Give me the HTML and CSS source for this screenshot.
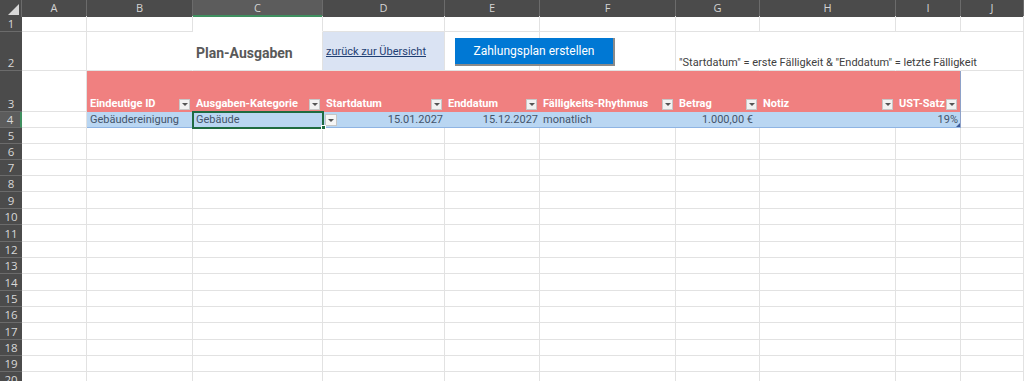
FILE: index.html
```html
<!DOCTYPE html>
<html lang="de">
<head>
<meta charset="utf-8">
<title>Plan-Ausgaben</title>
<link rel="stylesheet" href="styles.css">
</head>
<body>
<div class="sheet">
  <div class="row colhead">
    <div class="corner"><span class="tri"></span></div>
    <div class="ch">A</div><div class="ch">B</div><div class="ch ch-sel">C</div><div class="ch">D</div><div class="ch">E</div><div class="ch">F</div><div class="ch">G</div><div class="ch">H</div><div class="ch">I</div><div class="ch">J</div>
  </div>

  <div class="row h16">
    <div class="rh">1</div><div class="c"></div><div class="c"></div><div class="c nob"></div><div class="c"></div><div class="c"></div><div class="c"></div><div class="c"></div><div class="c"></div><div class="c"></div><div class="c"></div>
  </div>

  <div class="row h39">
    <div class="rh">2</div>
    <div class="c"></div>
    <div class="c nor"></div>
    <div class="c title-cell"><span class="title">Plan-Ausgaben</span></div>
    <div class="c link-cell"><a class="link" href="#">zurück zur Übersicht</a></div>
    <div class="c btn-host"><div class="macro-btn">Zahlungsplan erstellen</div></div>
    <div class="c"></div>
    <div class="c nor note-cell"><span class="note">"Startdatum" = erste Fälligkeit &amp; "Enddatum" = letzte Fälligkeit</span></div>
    <div class="c nor"></div>
    <div class="c nor"></div>
    <div class="c"></div>
  </div>

  <div class="row h41">
    <div class="rh">3</div>
    <div class="c"></div>
    <div class="th th-first"><span>Eindeutige ID</span><i class="flt"></i></div>
    <div class="th"><span>Ausgaben-Kategorie</span><i class="flt"></i></div>
    <div class="th"><span>Startdatum</span><i class="flt"></i></div>
    <div class="th"><span>Enddatum</span><i class="flt"></i></div>
    <div class="th"><span>Fälligkeits-Rhythmus</span><i class="flt"></i></div>
    <div class="th"><span>Betrag</span><i class="flt"></i></div>
    <div class="th"><span>Notiz</span><i class="flt"></i></div>
    <div class="th th-last"><span>UST-Satz</span><i class="flt"></i></div>
    <div class="c"></div>
  </div>

  <div class="row h16">
    <div class="rh rh-sel">4</div>
    <div class="c"></div>
    <div class="td td-first">Gebäudereinigung</div>
    <div class="td td-sel">Gebäude<span class="handle"></span></div>
    <div class="td num"><i class="dd"></i>15.01.2027</div>
    <div class="td num">15.12.2027</div>
    <div class="td">monatlich</div>
    <div class="td num cur">1.000,00 €</div>
    <div class="td"></div>
    <div class="td num td-last">19%<span class="resize"></span></div>
    <div class="c"></div>
  </div>

  <div class="row h16"><div class="rh">5</div><div class="c"></div><div class="c"></div><div class="c"></div><div class="c"></div><div class="c"></div><div class="c"></div><div class="c"></div><div class="c"></div><div class="c"></div><div class="c"></div></div>
  <div class="row h16"><div class="rh">6</div><div class="c"></div><div class="c"></div><div class="c"></div><div class="c"></div><div class="c"></div><div class="c"></div><div class="c"></div><div class="c"></div><div class="c"></div><div class="c"></div></div>
  <div class="row h16"><div class="rh">7</div><div class="c"></div><div class="c"></div><div class="c"></div><div class="c"></div><div class="c"></div><div class="c"></div><div class="c"></div><div class="c"></div><div class="c"></div><div class="c"></div></div>
  <div class="row h16"><div class="rh">8</div><div class="c"></div><div class="c"></div><div class="c"></div><div class="c"></div><div class="c"></div><div class="c"></div><div class="c"></div><div class="c"></div><div class="c"></div><div class="c"></div></div>
  <div class="row h17"><div class="rh">9</div><div class="c"></div><div class="c"></div><div class="c"></div><div class="c"></div><div class="c"></div><div class="c"></div><div class="c"></div><div class="c"></div><div class="c"></div><div class="c"></div></div>
  <div class="row h16"><div class="rh">10</div><div class="c"></div><div class="c"></div><div class="c"></div><div class="c"></div><div class="c"></div><div class="c"></div><div class="c"></div><div class="c"></div><div class="c"></div><div class="c"></div></div>
  <div class="row h17"><div class="rh">11</div><div class="c"></div><div class="c"></div><div class="c"></div><div class="c"></div><div class="c"></div><div class="c"></div><div class="c"></div><div class="c"></div><div class="c"></div><div class="c"></div></div>
  <div class="row h16"><div class="rh">12</div><div class="c"></div><div class="c"></div><div class="c"></div><div class="c"></div><div class="c"></div><div class="c"></div><div class="c"></div><div class="c"></div><div class="c"></div><div class="c"></div></div>
  <div class="row h16"><div class="rh">13</div><div class="c"></div><div class="c"></div><div class="c"></div><div class="c"></div><div class="c"></div><div class="c"></div><div class="c"></div><div class="c"></div><div class="c"></div><div class="c"></div></div>
  <div class="row h17"><div class="rh">14</div><div class="c"></div><div class="c"></div><div class="c"></div><div class="c"></div><div class="c"></div><div class="c"></div><div class="c"></div><div class="c"></div><div class="c"></div><div class="c"></div></div>
  <div class="row h16"><div class="rh">15</div><div class="c"></div><div class="c"></div><div class="c"></div><div class="c"></div><div class="c"></div><div class="c"></div><div class="c"></div><div class="c"></div><div class="c"></div><div class="c"></div></div>
  <div class="row h16"><div class="rh">16</div><div class="c"></div><div class="c"></div><div class="c"></div><div class="c"></div><div class="c"></div><div class="c"></div><div class="c"></div><div class="c"></div><div class="c"></div><div class="c"></div></div>
  <div class="row h17"><div class="rh">17</div><div class="c"></div><div class="c"></div><div class="c"></div><div class="c"></div><div class="c"></div><div class="c"></div><div class="c"></div><div class="c"></div><div class="c"></div><div class="c"></div></div>
  <div class="row h16"><div class="rh">18</div><div class="c"></div><div class="c"></div><div class="c"></div><div class="c"></div><div class="c"></div><div class="c"></div><div class="c"></div><div class="c"></div><div class="c"></div><div class="c"></div></div>
  <div class="row h16"><div class="rh">19</div><div class="c"></div><div class="c"></div><div class="c"></div><div class="c"></div><div class="c"></div><div class="c"></div><div class="c"></div><div class="c"></div><div class="c"></div><div class="c"></div></div>
  <div class="row h16"><div class="rh">20</div><div class="c"></div><div class="c"></div><div class="c"></div><div class="c"></div><div class="c"></div><div class="c"></div><div class="c"></div><div class="c"></div><div class="c"></div><div class="c"></div></div>
</div>
</body>
</html>
```

FILE: styles.css
```css
* { box-sizing: border-box; }

html, body {
  margin: 0;
  padding: 0;
  background: #ffffff;
  overflow: hidden;
}

body {
  width: 1024px;
  height: 381px;
  font-family: "Roboto", "Liberation Sans", sans-serif;
  font-size: 11px;
  color: #000;
}

.sheet {
  width: 1024px;
}

.row {
  display: grid;
  grid-template-columns: 22px 65px 106px 130px 122px 95px 136px 84px 136px 65px 63px;
}

.h16 { height: 16px; }
.h17 { height: 17px; }
.h39 { height: 39px; }
.h41 { height: 41px; }

/* column header */
.colhead { height: 16px; }

.corner {
  position: relative;
  background: #4b4b4b;
  border-right: 1px solid #6b6b6b;
}

.corner .tri {
  position: absolute;
  right: 2px;
  bottom: 2px;
  width: 0;
  height: 0;
  border-left: 11px solid transparent;
  border-bottom: 11px solid #d8d8d8;
}

.ch {
  background: #4b4b4b;
  color: #d4d4d4;
  border-right: 1px solid #6b6b6b;
  font-family: "Open Sans", sans-serif;
  font-size: 11px;
  line-height: 16px;
  text-align: center;
}

.ch-sel {
  background: #5c5c5c;
  border-bottom: 2px solid #3f8f5f;
  line-height: 15px;
}

/* row header */
.rh {
  background: #4b4b4b;
  color: #d8d8d8;
  border-bottom: 1px solid #6b6b6b;
  font-family: "Open Sans", sans-serif;
  font-size: 11.5px;
  display: flex;
  align-items: flex-end;
  justify-content: center;
  line-height: 15px;
}

.rh-sel {
  background: #5c5c5c;
  border-right: 2px solid #3f8f5f;
}

/* plain cells */
.c {
  border-right: 1px solid #e2e2e2;
  border-bottom: 1px solid #e2e2e2;
  position: relative;
}

.nob { border-bottom-color: transparent; }
.nor { border-right-color: transparent; }

.title-cell {
  display: flex;
  align-items: center;
  padding-left: 3px;
  padding-top: 3px;
}

.title {
  font-family: "Roboto", "Liberation Sans", sans-serif;
  font-weight: bold;
  font-size: 14px;
  color: #595959;
  white-space: nowrap;
}

.link-cell {
  background: #dae3f3;
  display: flex;
  align-items: center;
  padding-left: 3px;
  padding-top: 1px;
}

.link {
  color: #1f3f74;
  text-decoration: underline;
  font-size: 11px;
  white-space: nowrap;
}

.btn-host { overflow: visible; }

.macro-btn {
  position: absolute;
  left: 10px;
  top: 6px;
  width: 160px;
  height: 28px;
  background: #0078d4;
  color: #ffffff;
  border-right: 2px solid #8a8a8a;
  border-bottom: 2px solid #8a8a8a;
  font-size: 12px;
  display: flex;
  align-items: center;
  justify-content: center;
  z-index: 2;
  white-space: nowrap;
}

.note-cell {
  display: flex;
  align-items: flex-end;
  padding-left: 3px;
  padding-bottom: 1px;
}

.note {
  white-space: nowrap;
  color: #404040;
  font-size: 11px;
  position: relative;
  z-index: 1;
}

/* table header */
.th {
  background: #f08080;
  color: #ffffff;
  font-weight: bold;
  display: flex;
  align-items: flex-end;
  justify-content: space-between;
  padding: 0 3px 2px 3px;
  white-space: nowrap;
  line-height: 13px;
}

.th-last { border-right: 1px solid #8ea1c8; }

.flt {
  display: flex;
  align-items: center;
  justify-content: center;
  width: 11px;
  height: 11px;
  flex: none;
  background: #f2f2f2;
  border: 1px solid #c8c8c8;
}

.flt::before {
  content: "";
  width: 0;
  height: 0;
  border-left: 3px solid transparent;
  border-right: 3px solid transparent;
  border-top: 3px solid #555;
}

/* data row */
.td {
  background: #b9d6f2;
  color: #44546a;
  border-bottom: 1px solid #8eb4e3;
  padding: 1px 3px 0 3px;
  line-height: 14px;
  white-space: nowrap;
  position: relative;
}

.td-last { border-right: 1px solid #8ea1c8; }

.num { text-align: right; padding-right: 2px; }
.cur { padding-right: 7px; }

.td-sel {
  outline: 2px solid #1e6b41;
  outline-offset: -1px;
  z-index: 3;
}

.handle {
  position: absolute;
  right: -3px;
  bottom: -3px;
  width: 5px;
  height: 5px;
  background: #1e6b41;
  border: 1px solid #ffffff;
}

.dd {
  position: absolute;
  left: 2px;
  top: 2px;
  width: 12px;
  height: 12px;
  background: #f6f6f6;
  border: 1px solid #c6c6c6;
  display: flex;
  align-items: center;
  justify-content: center;
}

.dd::before {
  content: "";
  width: 0;
  height: 0;
  border-left: 3px solid transparent;
  border-right: 3px solid transparent;
  border-top: 3px solid #555;
}

.resize {
  position: absolute;
  right: 0;
  bottom: 0;
  width: 0;
  height: 0;
  border-left: 4px solid transparent;
  border-bottom: 4px solid #3d5a9a;
}
```
